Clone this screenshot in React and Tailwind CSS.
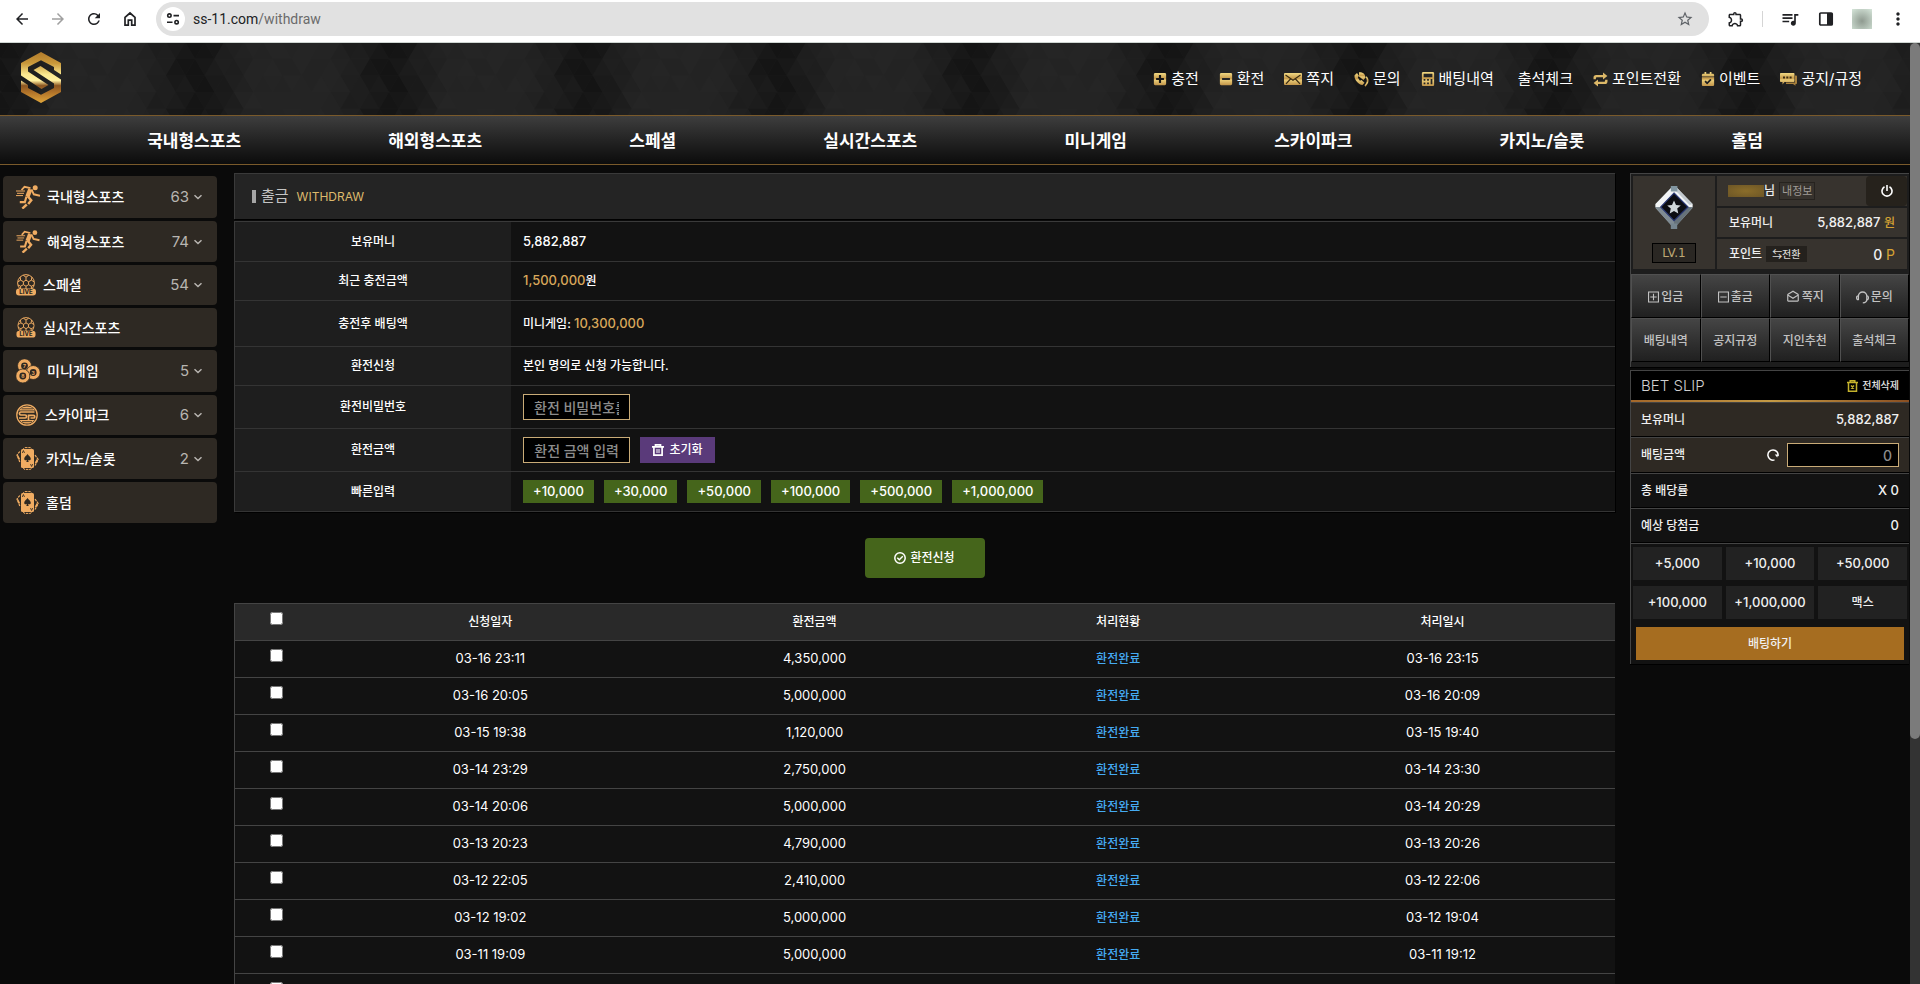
import React from "react";
import {
  MdArrowBack,
  MdArrowForward,
  MdRefresh,
  MdStarBorder,
  MdOutlineExtension,
  MdQueueMusic,
  MdMoreVert,
  MdOutlineDrafts,
} from "react-icons/md";
import {
  FaPlusSquare,
  FaMinusSquare,
  FaCalculator,
  FaCalendarCheck,
} from "react-icons/fa";

/* ---------- Browser bar ---------- */

function BrowserBar() {
  return (
    <div className="flex h-[43px] shrink-0 items-start border-b border-[#cfd6d2] bg-white pt-0.5 text-[#202124]">
      <div className="flex h-[34px] flex-1 items-center">
        <div className="flex items-center gap-[18px] pr-[17px] pl-[13px]">
          <button aria-label="뒤로"><MdArrowBack size={18} /></button>
          <button aria-label="앞으로" className="text-[#a0a0a0]"><MdArrowForward size={18} /></button>
          <button aria-label="새로고침"><MdRefresh size={18} /></button>
          <button aria-label="홈">
            <svg width="18" height="18" viewBox="0 0 18 18" fill="none" stroke="currentColor" strokeWidth="1.7">
              <path d="M4 15.2V7.4L9 3l5 4.4v7.8h-3.3v-5H7.3v5z" />
            </svg>
          </button>
        </div>
        <div className="flex h-[34px] flex-1 items-center rounded-full bg-[#e1e1e1] pr-[15px] pl-[5px]">
          <button aria-label="사이트 정보" className="flex size-6 items-center justify-center rounded-full bg-white">
            <svg width="14" height="14" viewBox="0 0 14 14" fill="none" stroke="currentColor" strokeWidth="1.6">
              <circle cx="3.4" cy="3.6" r="1.7" />
              <path d="M7.5 3.6H13M1 10.2h5.5" />
              <circle cx="10.6" cy="10.2" r="1.7" />
            </svg>
          </button>
          <div className="flex-1 pl-2 font-[Roboto,sans-serif] text-[14px]">
            ss-11.com<span className="text-[#6b6b6b]">/withdraw</span>
          </div>
          <button aria-label="북마크" className="text-[#5f6368]"><MdStarBorder size={18} /></button>
        </div>
      </div>
      <div className="flex h-[34px] items-center pr-3 pl-[18px]">
        <button aria-label="확장 프로그램"><MdOutlineExtension size={18} /></button>
        <span className="mr-[17px] ml-[17px] h-4 w-px bg-[#d5d5d5]" />
        <button aria-label="미디어"><MdQueueMusic size={20} /></button>
        <button aria-label="사이드 패널" className="ml-[18px]">
          <svg width="16" height="16" viewBox="0 0 16 16">
            <rect x="1.8" y="2" width="12.4" height="12" rx="1" fill="none" stroke="currentColor" strokeWidth="1.7" />
            <path d="M9 2h5.5v12H9z" fill="currentColor" />
          </svg>
        </button>
        <span className="ml-[18px] size-5 bg-[radial-gradient(circle_at_50%_60%,#8f9a90,#d6e6da)]" />
        <button aria-label="메뉴" className="ml-[16px]"><MdMoreVert size={20} /></button>
      </div>
    </div>
  );
}

/* ---------- Header ---------- */

const TRI_W = 19.4;
const TRI_H = 16.7;

const triangles = [];
for (let row = 0; row < 5; row++) {
  for (let i = -1; i < 21; i++) {
    const x = (i * TRI_W) / 2;
    const y = row * TRI_H - 1;
    const up = (i + row) % 2 === 0;
    const cx = (x + TRI_W / 2 + 194) % 194;
    const distance = Math.abs(cx - 97) / 97;
    const key = (i + 20) % 20;
    const noise = ((key * 37 + row * 53 + key * row * 11) % 17) / 17;
    const hub = Math.max(0, 1 - distance * 1.7);
    triangles.push({
      points: up
        ? `${x},${y + TRI_H} ${x + TRI_W},${y + TRI_H} ${x + TRI_W / 2},${y}`
        : `${x},${y} ${x + TRI_W},${y} ${x + TRI_W / 2},${y + TRI_H}`,
      opacity: hub * (0.34 + noise * 0.16) + noise * 0.06,
    });
  }
}

function HeaderTexture() {
  return (
    <svg className="absolute inset-0 h-full w-full" aria-hidden="true">
      <defs>
        <pattern id="tri" width="194" height="84" x="98" patternUnits="userSpaceOnUse">
          {triangles.map((t, i) => (
            <polygon key={i} points={t.points} fill="#000" fillOpacity={t.opacity} />
          ))}
        </pattern>
        <linearGradient id="gold" x1="0" y1="0" x2="0" y2="1">
          <stop offset="0" stopColor="#f1d983" />
          <stop offset="0.45" stopColor="#c79b4b" />
          <stop offset="0.6" stopColor="#e9cb76" />
          <stop offset="1" stopColor="#c2954a" />
        </linearGradient>
      </defs>
      <rect width="100%" height="100%" fill="#252525" />
      <rect width="100%" height="100%" fill="url(#tri)" />
    </svg>
  );
}

function Logo() {
  return (
    <svg width="40" height="51" viewBox="0 0 40 51" role="img" aria-label="S">
      <defs>
        <linearGradient id="logo" gradientUnits="userSpaceOnUse" x1="0" y1="0" x2="0" y2="51">
          <stop offset="0" stopColor="#b27b2b" />
          <stop offset="0.22" stopColor="#c9983a" />
          <stop offset="0.44" stopColor="#fbe98f" />
          <stop offset="0.56" stopColor="#fff0a0" />
          <stop offset="0.66" stopColor="#8c5622" />
          <stop offset="0.8" stopColor="#b3752a" />
          <stop offset="1" stopColor="#e0a63b" />
        </linearGradient>
      </defs>
      <g fill="url(#logo)">
        <path d="M20 0 40 11V22.5L33 18V15L20 8.3 7 15V19.5L27.5 33 20.5 37 0 23.5V11Z" />
        <path d="M20 51 0 40V28.5L7 33V36L20 42.7 33 36V31.5L12.5 18 19.5 14 40 27.5V40Z" />
      </g>
    </svg>
  );
}

function EnvelopeGold() {
  return (
    <svg width="18" height="12" viewBox="0 0 18 12">
      <rect width="18" height="12" rx="1" fill="url(#gold)" />
      <path d="M1.5 2 9 7.2 16.5 2M2 10.8 6.500 6M16 10.8 11.500 6" fill="none" stroke="#3a2c12" strokeWidth="1.2" />
    </svg>
  );
}

function PhoneGold() {
  return (
    <svg width="15" height="15" viewBox="0 0 15 15" fill="url(#gold)">
      <path d="M3 1 0.600 3.200C-0.200 7 4 12.500 8.500 13l2-2.200-3-2.800-1.600.8L3.800 5.600l1.100-1.800z" />
      <path d="M5 0.300c3.800-.4 6.400 1.900 6.400 5.400L9.500 8 5 4.600z" />
      <path d="M12.600 4.200c2.600 2.600 2.900 6.300-1.200 10.500l-.9-1.400c2.800-3 2.900-5.800 1.100-8z" />
    </svg>
  );
}

function RepeatGold() {
  return (
    <svg width="15" height="15" viewBox="0 0 15 15" fill="#dcb868">
      <path d="M0.500 7.300V5.500c0-1.600 1-2.600 2.600-2.600H10V0.600l4.400 3.500L10 7.500V5.300H3.800c-.6 0-.9.300-.9.900v1.100z" />
      <path d="M14.500 7.700v1.800c0 1.600-1 2.600-2.600 2.600H5v2.300L.6 10.900 5 7.500v2.200h6.200c.6 0 .9-.3.900-.9V7.700z" />
    </svg>
  );
}

function ChatGold() {
  return (
    <svg width="17" height="13" viewBox="0 0 17 13">
      <path d="M15 2.500h1.200c.5 0 .8.300.8.800v6.900c0 .5-.3.800-.8.800H15.500v1.800L13 11H6V9.500h9z" fill="#a8803c" />
      <path d="M1 0h12.500c.6 0 1 .4 1 1v7c0 .6-.4 1-1 1H4.500L2.500 11.500V9H1C.4 9 0 8.600 0 8V1c0-.6.4-1 1-1z" fill="url(#gold)" />
      <path d="M3 3.600h2v2H3zM6.300 3.600h2v2h-2zM9.600 3.600h2v2h-2z" fill="#3a2c12" />
    </svg>
  );
}

const goldIcon = { size: 14, fill: "url(#gold)" };

const topLinks = [
  { label: "충전", icon: <FaPlusSquare {...goldIcon} /> },
  { label: "환전", icon: <FaMinusSquare {...goldIcon} /> },
  { label: "쪽지", icon: <EnvelopeGold /> },
  { label: "문의", icon: <PhoneGold /> },
  { label: "배팅내역", icon: <FaCalculator {...goldIcon} /> },
  { label: "출석체크", icon: null },
  { label: "포인트전환", icon: <RepeatGold /> },
  { label: "이벤트", icon: <FaCalendarCheck {...goldIcon} /> },
  { label: "공지/규정", icon: <ChatGold /> },
];

const navItems = [
  "국내형스포츠",
  "해외형스포츠",
  "스페셜",
  "실시간스포츠",
  "미니게임",
  "스카이파크",
  "카지노/슬롯",
  "홀덤",
];

function Header() {
  return (
    <header>
      <div className="relative h-[72px]">
        <HeaderTexture />
        <div className="relative flex h-full items-center justify-between pr-12 pl-[21px]">
          <a href="#home" className="pb-1"><Logo /></a>
          <div className="flex items-center gap-5 text-[15px] text-white">
            {topLinks.map((l) => (
              <a key={l.label} href="#top" className="flex items-center gap-1">
                <span>{l.icon}</span>
                {l.label}
              </a>
            ))}
          </div>
        </div>
      </div>
      <nav className="flex h-[50px] items-center justify-evenly border-y border-[#7a5a2b] bg-linear-to-b from-[#3e3e3e] to-[#0c0c0c] pt-[3px] text-[17px] font-bold text-white">
        {navItems.map((n) => (
          <a key={n} href="#nav">{n}</a>
        ))}
      </nav>
    </header>
  );
}

/* ---------- Sidebar ---------- */

function RunnerIcon({ size }) {
  return (
    <svg width="24" height={size} viewBox="0 0 24 24" fill="none" stroke="#f0ac62">
      <circle cx="19.200" cy="2.800" r="2.500" fill="#f0ac62" stroke="none" />
      <path d="M5.500 5 8.500 1.800l6 1.300" strokeWidth="1.800" />
      <path d="M14.300 4.300 11.500 11.500" strokeWidth="4.400" />
      <path d="M15.500 4.500 17.800 9.300l6.200 1.400" strokeWidth="1.900" />
      <path d="M11.500 11 15.200 15.300l-3 3.700" strokeWidth="2.500" />
      <path d="M10.800 19.500 6.300 23.600" strokeWidth="2.400" />
      <path d="M10.500 11.500 8.800 17.200H3.800" strokeWidth="2.200" />
      <path d="M0 6h9M1 8.300h7M0 10.600h7" strokeWidth="1" />
    </svg>
  );
}

function LiveIcon({ size }) {
  return (
    <svg width="20" height={size} viewBox="0 0 20 22">
      <g fill="none" stroke="#f0ac62" strokeWidth="1">
        <circle cx="10" cy="9" r="8.400" />
        <path d="M10 6.200l2.600 1.500v3L10 12.200 7.400 10.700v-3zM10 6.200V3.200M12.600 7.700l2.800-1.500M12.600 10.700l2.800 1.500M7.400 10.700l-2.800 1.500M7.400 7.700 4.600 6.200M10 3.200 7.300 1.300M10 3.200l2.700-1.900M15.400 6.200l.4-3M15.400 6.200l2.700 1.600M4.600 6.200l-.4-3M4.600 6.200 1.900 7.800M4.600 12.200 1.900 11M15.400 12.200l2.700-1.200M10 12.200v3M4.600 12.200V15M15.400 12.200V15" />
      </g>
      <rect y="14.500" width="20" height="7" rx="3" fill="#f0ac62" />
      <text x="10" y="20.200" textAnchor="middle" fontSize="6" fontWeight="800" fill="#2e2821">LIVE</text>
    </svg>
  );
}

function Ball({ x, y, n }) {
  return (
    <g>
      <circle cx={x} cy={y} r="7" fill="#f0ac62" stroke="#2e2821" strokeWidth="0.800" />
      <circle cx={x} cy={y} r="3.400" fill="#2e2821" />
      <text x={x} y={y + 2} textAnchor="middle" fontSize="5" fontWeight="700" fill="#f0ac62">{n}</text>
    </g>
  );
}

function BallsIcon() {
  return (
    <svg width="24" height="24" viewBox="0 0 24 24">
      <Ball x={8.5} y={6.800} n="7" />
      <Ball x={17.2} y={13.500} n="3" />
      <Ball x={6.800} y={17} n="8" />
    </svg>
  );
}

function SkyParkIcon() {
  return (
    <svg width="22" height="22" viewBox="0 0 22 22" fill="none" stroke="#f0ac62">
      <circle cx="11" cy="11" r="10.200" strokeWidth="1.300" />
      <path d="M3 6.500C5 3.400 8 2.600 11 2.600s6 .9 8 3.900z" fill="#f0ac62" stroke="none" />
      <path d="M3.500 16c2 2.800 4.500 3.600 7.500 3.600s5.500-.8 7.500-3.600z" fill="#f0ac62" stroke="none" />
      <path d="M5.500 4.800h11.500M6 17.600h10" stroke="#2e2821" strokeWidth="0.800" />
      <path d="M18.500 8H4.800c-1.800 0-1.800 3 0 3h4.400c1.700 0 1.700 3 0 3H3M12.500 16.500v-5.200h5c1.700 0 1.700 2.700 0 2.700h-3" strokeWidth="1.700" />
    </svg>
  );
}

function CardsIcon() {
  return (
    <svg width="23" height="23" viewBox="0 0 23 23">
      <rect x="7.500" y="0.600" width="8" height="21.800" rx="1.500" fill="none" stroke="#f0ac62" strokeWidth="1" strokeDasharray="2.500 0.800" />
      <path d="M3.800 4.500 1 8l2.800 7M19 8l3.200 4.500-3.200 6" fill="none" stroke="#f0ac62" strokeWidth="1.200" strokeDasharray="2.500 0.800" />
      <path d="M1.500 8.500l2 4M21.500 12.500l-2 3.500" stroke="#f0ac62" strokeWidth="1.600" />
      <rect x="5" y="2" width="13" height="19" rx="1.500" fill="#f0ac62" />
      <path d="M11.500 7c1 1.700 3.300 2.800 3.300 4.700 0 1.600-1.800 2-2.800 1l.7 2.300h-2.400l.7-2.300c-1 1-2.800.6-2.800-1C8.200 9.800 10.500 8.700 11.500 7z" fill="#2e2821" />
      <path d="M6.300 6 7.400 3.500 8.500 6M14.500 17l1.100 2.500 1.100-2.500" fill="none" stroke="#2e2821" strokeWidth="0.800" />
    </svg>
  );
}

function ChevronDown() {
  return (
    <svg width="14" height="14" viewBox="0 0 14 14" fill="none" stroke="currentColor" strokeWidth="1.500">
      <path d="M3.500 5.200 7 8.500l3.500-3.300" />
    </svg>
  );
}

const sideItems = [
  { label: "국내형스포츠", count: 63, icon: <RunnerIcon size={24} /> },
  { label: "해외형스포츠", count: 74, icon: <RunnerIcon size={23} /> },
  { label: "스페셜", count: 54, icon: <LiveIcon size={22} /> },
  { label: "실시간스포츠", icon: <LiveIcon size={21} /> },
  { label: "미니게임", count: 5, icon: <BallsIcon /> },
  { label: "스카이파크", count: 6, icon: <SkyParkIcon /> },
  { label: "카지노/슬롯", count: 2, icon: <CardsIcon /> },
  { label: "홀덤", icon: <CardsIcon /> },
];

function Sidebar() {
  return (
    <aside className="flex w-[214px] shrink-0 flex-col gap-[3px] pt-[3px]">
      {sideItems.map((s) => (
        <a
          key={s.label}
          href="#side"
          className="flex items-center rounded bg-[#2e2923] py-[9px] pr-3 pl-[13px] text-[14px] font-medium text-white"
        >
          {s.icon}
          <span className="flex-1 pl-[7px] leading-5">{s.label}</span>
          {s.count !== undefined && (
            <span className="flex items-center gap-0.5 text-[15px] leading-5 font-normal text-[#b8b5b1]">
              {s.count}
              <ChevronDown />
            </span>
          )}
        </a>
      ))}
    </aside>
  );
}

/* ---------- Main ---------- */

function TrashIcon() {
  return (
    <svg width="12" height="12" viewBox="0 0 12 12" fill="none" stroke="currentColor" strokeWidth="1.700">
      <path d="M0 2.800h12M3.500 3V.9h5V3M1.900 3v8.100h8.200V3" />
      <path d="M5 5v4M7 5v4" strokeWidth="1" />
    </svg>
  );
}

const quickAmounts = ["+10,000", "+30,000", "+50,000", "+100,000", "+500,000", "+1,000,000"];

function FormRow({ label, height, htmlFor, children }) {
  const heading = "w-1/5 border-b border-[#343434] bg-[#1e1e1e] text-center font-medium";
  return (
    <tr className={height}>
      <th scope="row" className={heading}>
        {htmlFor ? <label htmlFor={htmlFor}>{label}</label> : label}
      </th>
      <td className="border-b border-[#343434] px-3">{children}</td>
    </tr>
  );
}

const fieldClass =
  "h-[26px] w-[107px] border border-[#c9ab77] bg-black px-2.5 text-[14px] text-white placeholder:text-[#8c8c8c] outline-none";

function WithdrawForm() {
  return (
    <table className="mt-0.5 w-full border-separate border-spacing-0 border-t border-l border-[#3a3a3a] bg-[#121212] text-[12px] font-medium text-white shadow-[1px_1px_0_#000]">
      <tbody>
        <FormRow label="보유머니" height="h-10"><span className="text-[13px]">5,882,887</span></FormRow>
        <FormRow label="최근 충전금액" height="h-[39px]">
          <span className="text-[13px] text-[#d9a85b]">1,500,000</span>원
        </FormRow>
        <FormRow label="충전후 배팅액" height="h-[46px]">
          미니게임: <span className="text-[13px] text-[#d9a85b]">10,300,000</span>
        </FormRow>
        <FormRow label="환전신청" height="h-[39px]">본인 명의로 신청 가능합니다.</FormRow>
        <FormRow label="환전비밀번호" height="h-[43px]" htmlFor="pin">
          <input id="pin" type="password" placeholder="환전 비밀번호를 입력" className={fieldClass} />
        </FormRow>
        <FormRow label="환전금액" height="h-[43px]" htmlFor="amount">
          <div className="flex gap-2.5">
            <input id="amount" placeholder="환전 금액 입력" className={`${fieldClass} text-right`} />
            <button className="flex w-[75px] items-center justify-center gap-[5px] bg-[#5a3a7a]">
              <TrashIcon />초기화
            </button>
          </div>
        </FormRow>
        <FormRow label="빠른입력" height="h-10">
          <div className="flex gap-2.5 text-[13px]">
            {quickAmounts.map((q) => (
              <button key={q} className="h-[23px] bg-[#45651b] px-2.5">{q}</button>
            ))}
          </div>
        </FormRow>
      </tbody>
    </table>
  );
}

const history = [
  ["03-16 23:11", "4,350,000", "03-16 23:15"],
  ["03-16 20:05", "5,000,000", "03-16 20:09"],
  ["03-15 19:38", "1,120,000", "03-15 19:40"],
  ["03-14 23:29", "2,750,000", "03-14 23:30"],
  ["03-14 20:06", "5,000,000", "03-14 20:29"],
  ["03-13 20:23", "4,790,000", "03-13 20:26"],
  ["03-12 22:05", "2,410,000", "03-12 22:06"],
  ["03-12 19:02", "5,000,000", "03-12 19:04"],
  ["03-11 19:09", "5,000,000", "03-11 19:12"],
  ["", "", ""],
];

function History() {
  const cell = "border-b border-[#444] p-0";
  return (
    <table className="w-full table-fixed border-separate border-spacing-0 border-t border-l border-[#444] bg-[#121212] text-center text-[13px] text-white">
      <thead>
        <tr className="h-[37px] bg-[#292929] text-[12px]">
          <th className={`${cell} w-[6%] pt-2 align-top`}>
            <input type="checkbox" aria-label="전체 선택" className="mx-auto block size-[13px]" />
          </th>
          <th className={`${cell} w-[25%] font-medium`}>신청일자</th>
          <th className={`${cell} w-[22%] font-medium`}>환전금액</th>
          <th className={`${cell} w-[22%] font-medium`}>처리현황</th>
          <th className={`${cell} w-[25%] font-medium`}>처리일시</th>
        </tr>
      </thead>
      <tbody>
        {history.map(([date, amount, done], i) => (
          <tr key={i} className="h-[37px]">
            <td className={`${cell} pt-2 align-top`}>
              <input type="checkbox" aria-label={date || "선택"} className="mx-auto block size-[13px]" />
            </td>
            <td className={cell}>{date}</td>
            <td className={cell}>{amount}</td>
            <td className={`${cell} text-[12px] font-medium text-[#45aaf2]`}>{done && "환전완료"}</td>
            <td className={cell}>{done}</td>
          </tr>
        ))}
      </tbody>
    </table>
  );
}

function Main() {
  return (
    <main className="ml-[17px] min-w-0 flex-1">
      <h1 className="flex h-[46px] items-center border-t border-l border-[#3a3a3a] bg-[#242424] pl-[17px] text-[15px] text-[#c4c4c4] shadow-[1px_1px_0_#000]">
        <span className="mr-[5px] h-[13px] w-1 bg-[#a5a5a5]" />
        출금
        <span className="pl-2 text-[12px] text-[#dcb96c]">WITHDRAW</span>
      </h1>
      <WithdrawForm />
      <div className="flex justify-center pt-[26px] pb-[25px]">
        <button className="flex h-10 w-[120px] items-center justify-center gap-1 rounded bg-[#45651b] text-[12px] font-medium text-white">
          <svg width="12" height="12" viewBox="0 0 12 12" fill="none" stroke="currentColor" strokeWidth="1.500">
            <circle cx="6" cy="6" r="5.200" />
            <path d="M3.300 5.800 5.300 7.800 8.800 4.300" />
          </svg>
          환전신청
        </button>
      </div>
      <History />
    </main>
  );
}

/* ---------- Right panel ---------- */

function Emblem() {
  return (
    <svg width="38" height="44" viewBox="0 0 38 44">
      <path d="M16 2 0.500 18v4L16 39h6l15.500-17v-4L22 2z" fill="#98a3aa" />
      <path d="M16 2 0.500 18v3L5.700 21 19 7V2zM22 2l15.500 16v3H33L19 7V2z" fill="#f3f5f6" />
      <path d="M22 2l15.500 16-3 1L20 4z" fill="#c3cacf" />
      <path d="M0.500 21.500 16 39h3v-4.300L5.700 21z" fill="#7f8b93" />
      <path d="M37.500 21.500 22 39h-3v-4.300L33 21z" fill="#66727a" />
      <path d="M15.800 0h6.600v5.500h-6.600z" fill="#8195a0" />
      <path d="M15.800 37.500h6.400V43h-6.400z" fill="#75858f" />
      <path d="M19 7 33 21 19 34.700 5.700 21z" fill="#0c0d12" stroke="#2b3974" strokeWidth="1.200" />
      <path d="M19 14.500l2 4.500 4.800.4-3.600 3.200 1.100 4.800L19 24.900l-4.300 2.500 1.100-4.800-3.600-3.200L17 19z" fill="#cfd6da" />
    </svg>
  );
}

function Profile() {
  const cell = "flex items-center bg-[#37332e]";
  return (
    <div className="flex gap-0.5 p-0.5 pb-[5px]">
      <div className="flex w-[82px] flex-col items-center justify-between bg-[#37332e] pt-2.5 pb-1.5">
        <Emblem />
        <span className="border border-black bg-[#2a2723] px-[9px] font-['DejaVu_Sans',sans-serif] text-[12px] leading-[18px] text-[#bda873]">
          LV.1
        </span>
      </div>
      <div className="flex flex-1 flex-col gap-0.5">
        <div className={`${cell} h-[30px] pl-[11px]`}>
          <span className="h-3 w-9 bg-[radial-gradient(#8a6d2a,#6d5626)]" />
          <span className="font-medium">님</span>
          <button className="ml-1 h-[18px] border border-[#26231f] px-0.5 text-[11px] leading-4 font-normal text-[#a09c97]">내정보</button>
          <button aria-label="로그아웃" className="ml-auto flex h-full w-[41px] items-center justify-center rounded bg-[#26221c]">
            <svg width="12" height="12" viewBox="0 0 12 12" fill="none" stroke="#fff" strokeWidth="1.600">
              <path d="M6 0v6M3.500 1.800a5 5 0 1 0 5 0" />
            </svg>
          </button>
        </div>
        <div className={`${cell} h-[29px] justify-between px-3`}>
          <span className="font-medium">보유머니</span>
          <span className="text-[13px]">5,882,887 <span className="text-[12px] text-[#d5a233]">원</span></span>
        </div>
        <div className={`${cell} h-[30px] px-3`}>
          <span className="font-medium">포인트</span>
          <button className="ml-1 h-4 bg-[#24211d] px-1.5 text-[10px] leading-4 text-[#d9d7d4]">⇆전환</button>
          <span className="ml-auto text-[14px]">0 <span className="font-normal text-[#d5a233]">P</span></span>
        </div>
      </div>
    </div>
  );
}

function BoxIcon({ d }) {
  return (
    <svg width="11" height="12" viewBox="0 0 12 12" fill="none" stroke="currentColor" strokeWidth="1.200">
      <path d={`M.6.600h10.800v10.800H.6z${d}`} />
    </svg>
  );
}

function HeadsetIcon() {
  return (
    <svg width="13" height="13" viewBox="0 0 13 13" fill="none" stroke="currentColor" strokeWidth="1.300">
      <path d="M2.400 9V5.200a4.200 4.200 0 0 1 8.400 0V8.500c0 2-1.500 3.200-4 3.400" />
      <path d="M2.400 4.800C1 4.800.6 5.600.6 6.800S1 8.800 2.400 8.800M10.800 4.800c1.200 0 1.600.8 1.600 2s-.4 2-1.600 2" />
    </svg>
  );
}

const shortcuts = [
  { label: "입금", icon: <BoxIcon d="M6 2.500v7M2.500 6h7" /> },
  { label: "출금", icon: <BoxIcon d="M2.500 6h7" /> },
  { label: "쪽지", icon: <MdOutlineDrafts size={14} /> },
  { label: "문의", icon: <HeadsetIcon /> },
  { label: "배팅내역" },
  { label: "공지규정" },
  { label: "지인추천" },
  { label: "출석체크" },
];

function Shortcuts() {
  return (
    <div className="grid grid-cols-4 pb-[5px]">
      {shortcuts.map((s) => (
        <button
          key={s.label}
          className="flex h-11 items-center justify-center gap-0.5 border-t border-r border-b border-l border-t-[#505050] border-r-black border-b-black border-l-[#505050] bg-linear-to-b from-[#454545] to-[#202020] pt-0.5 font-medium text-[#c2c2c2]"
        >
          {s.icon}
          {s.label}
        </button>
      ))}
    </div>
  );
}

const slipAmounts = ["+5,000", "+10,000", "+50,000", "+100,000", "+1,000,000", "맥스"];

function BetSlip() {
  const row = "flex items-center justify-between border-t border-b border-t-[#444] border-b-black px-2.5";
  return (
    <section className="mt-[3px] border-t border-l border-[#444] bg-[#121212] shadow-[0_1px_0_#000]">
      <div className="flex h-[29px] items-center justify-between bg-black px-2.5">
        <h2 className="text-[15px] leading-5 font-light text-[#d0d0d0]">BET SLIP</h2>
        <button className="flex items-center gap-1 text-[10px] text-[#e5e5e5]">
          <svg width="11" height="12" viewBox="0 0 11 12" fill="none" stroke="#c4b22c" strokeWidth="1.500">
            <path d="M0 2.600h11M3.200 2.600V.8h4.600v1.800M1.500 2.600v8.600h8V2.600M4 5.500l3 3M7 5.500l-3 3" />
          </svg>
          전체삭제
        </button>
      </div>
      <div className="h-0.5 bg-linear-to-r from-[#a3672a] via-[#c49a45] to-[#8a4f22]" />
      <div className={`${row} h-[35px] bg-[#2e2923]`}>
        <span>보유머니</span>
        <span className="text-[13px]">5,882,887</span>
      </div>
      <div className={`${row} h-9 bg-[#2e2923]`}>
        <label htmlFor="stake">배팅금액</label>
        <div className="flex items-center gap-2">
          <button aria-label="새로고침">
            <svg width="12" height="12" viewBox="0 0 12 12" fill="none" stroke="#fff" strokeWidth="1.500">
              <path d="M7.500 10.900A5.100 5.100 0 1 1 11 7" />
              <path d="M7.800 5.500h3.400l-1 3z" fill="#fff" stroke="none" />
            </svg>
          </button>
          <input
            id="stake"
            placeholder="0"
            className="h-6 w-28 border border-[#c9ab77] bg-black px-1.5 text-right text-[14px] text-white outline-none placeholder:text-[#8c8c8c]"
          />
        </div>
      </div>
      <div className={`${row} h-[35px]`}>
        <span>총 배당률</span>
        <span className="text-[13px]">X 0</span>
      </div>
      <div className={`${row} h-[35px]`}>
        <span>예상 당첨금</span>
        <span className="text-[13px]">0</span>
      </div>
      <div className="border-t border-[#444] px-0.5 pt-[3px] pb-1">
        <div className="grid grid-cols-3 gap-x-1 gap-y-1.5 text-[13px]">
          {slipAmounts.map((a) => (
            <button key={a} className="h-[33px] bg-[#222] last:text-[12px]">{a}</button>
          ))}
        </div>
        <div className="px-[3px] pt-2">
          <button className="h-[33px] w-full bg-[#a66d20]">배팅하기</button>
        </div>
      </div>
    </section>
  );
}

function RightPanel() {
  return (
    <aside className="ml-[15px] w-[279px] shrink-0 text-[12px] font-medium text-[#f0f0f0]">
      <div className="border-t border-l border-[#444] bg-[#1d1d1d] shadow-[0_1px_0_#000]">
        <Profile />
        <Shortcuts />
      </div>
      <BetSlip />
    </aside>
  );
}

export default function App() {
  return (
    <div className="flex h-screen flex-col overflow-hidden bg-[#0a0a0a] font-[Inter,'Noto_Sans_CJK_KR',sans-serif]">
      <BrowserBar />
      <div className="flex min-h-0 flex-1">
        <div className="min-w-0 flex-1 overflow-hidden">
          <Header />
          <div className="flex items-start pt-2 pr-px pl-[3px]">
            <Sidebar />
            <Main />
            <RightPanel />
          </div>
        </div>
        <div className="w-[10px] bg-[#333]">
          <div className="h-[74%] rounded-full bg-[#7b7b7b]" />
        </div>
      </div>
    </div>
  );
}
